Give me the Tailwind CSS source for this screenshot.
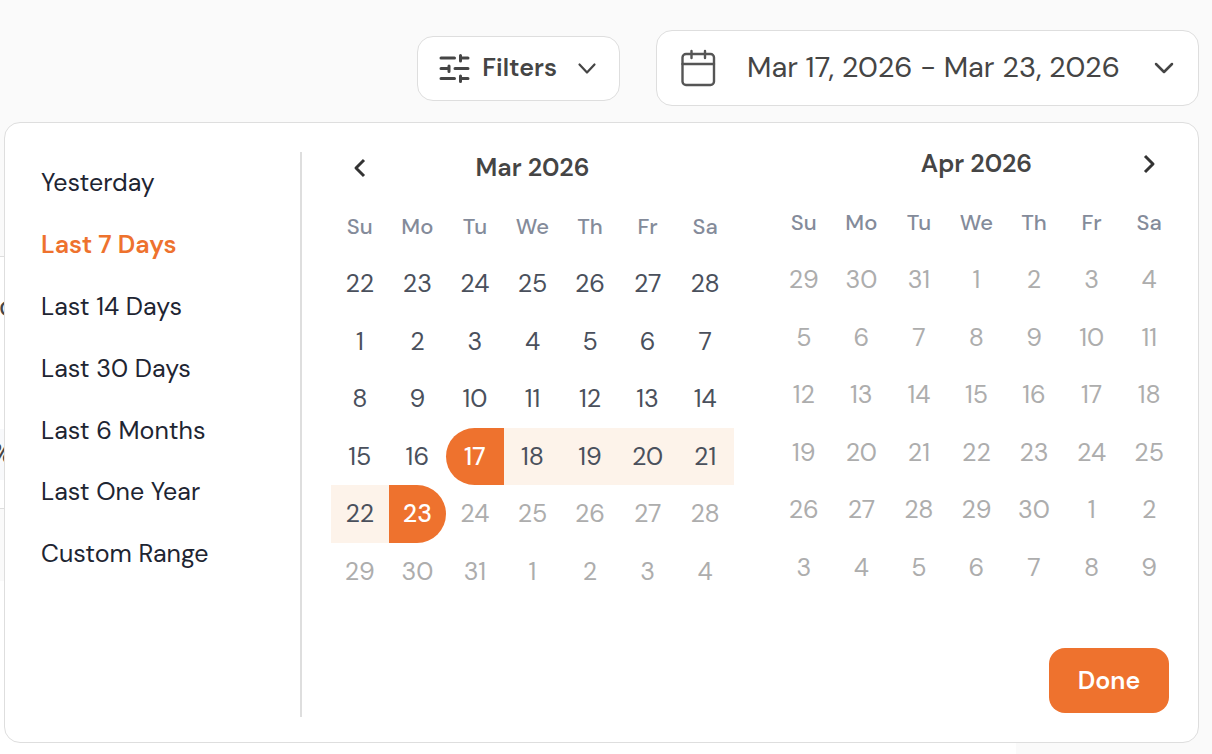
<!DOCTYPE html>
<html lang="en">
<head>
<meta charset="utf-8">
<meta name="viewport" content="width=device-width, initial-scale=1">
<title>Date range</title>
<script src="https://cdn.jsdelivr.net/npm/@tailwindcss/browser@4"></script>
</head>
<body class="relative h-screen overflow-hidden bg-[#fafafa] font-['DM_Sans',Inter,sans-serif] text-[#454545]">

<header class="flex items-center justify-end gap-9 pt-[30px] pr-[13px]">
  <button type="button" class="flex h-[65px] items-center rounded-2xl border border-[#dedede] bg-white pr-[22px] pl-5 text-[25px] font-semibold">
    <svg class="mr-3 size-8" viewBox="0 0 32 32" fill="none" stroke="currentColor" stroke-width="3" stroke-linecap="round" aria-hidden="true">
      <path d="M3 6h13.500M22.500 3.500v5.500M22.500 6h7.500M3 16.500h8M11 14v5.500M17 16.500h13M3 26.500h13.500M22.500 24v5.500M22.500 26.500h7.500"/>
    </svg>
    Filters
    <svg class="ml-5 h-5 w-5" viewBox="0 0 20 20" fill="none" stroke="currentColor" stroke-width="2.200" stroke-linecap="round" stroke-linejoin="round" aria-hidden="true"><path d="M2.500 6.500l7.500 8 7.500-8"/></svg>
  </button>

  <button type="button" class="flex h-[76px] w-[543px] items-center rounded-2xl border border-[#dedede] bg-white px-6 text-[29px]">
    <svg class="mr-[31px] h-[38px] w-[35px] shrink-0 text-[#555]" viewBox="0 0 35 38" fill="none" stroke="currentColor" stroke-width="2.400" stroke-linecap="round" aria-hidden="true">
      <rect x="1.500" y="5" width="31.500" height="31" rx="3.500"/><path d="M1.500 15h31.500M10.500 2v7M24 2v7"/>
    </svg>
    <span class="whitespace-nowrap">Mar 17, 2026 - Mar 23, 2026</span>
    <svg class="ml-auto h-5 w-5" viewBox="0 0 20 20" fill="none" stroke="currentColor" stroke-width="2.500" stroke-linecap="round" stroke-linejoin="round" aria-hidden="true"><path d="M2 6l8 8 8-8"/></svg>
  </button>
</header>

<main class="flex h-[648px] w-[1016px] flex-col pt-[150px] text-[28px]">
  <div class="flex h-[253px] shrink-0 flex-col overflow-hidden border-y border-[#dedede] bg-white">
    <p class="-ml-px h-[172px] pt-[29px]">c</p>
    <p class="h-[51px] bg-[#f8f9fb] pt-1"><span class="-ml-[9px]">%</span></p>
  </div>
  <div class="mt-[72px] grow bg-white"></div>
</main>

<section aria-label="Choose a date range" class="absolute top-[122px] right-[13px] left-1 flex rounded-2xl border border-[#dedede] bg-white pt-[29px] pr-5 pb-[25px]">
  <ul class="flex w-[297px] shrink-0 flex-col border-r-2 border-[#dedede] pl-9 text-[25px] text-[#1e2532]">
    <li class="flex h-[62px] items-center"><button type="button">Yesterday</button></li>
    <li class="flex h-[62px] items-center"><button type="button" class="font-semibold text-[#ee722e]">Last 7 Days</button></li>
    <li class="flex h-[62px] items-center"><button type="button">Last 14 Days</button></li>
    <li class="flex h-[62px] items-center"><button type="button">Last 30 Days</button></li>
    <li class="flex h-[61px] items-center"><button type="button">Last 6 Months</button></li>
    <li class="flex h-[62px] items-center"><button type="button">Last One Year</button></li>
    <li class="flex h-[62px] items-center"><button type="button">Custom Range</button></li>
  </ul>

  <div class="flex grow flex-col pl-[29px]">
    <div id="months" class="flex justify-between"></div>
    <button type="button" class="mt-auto mr-[9px] mb-1 h-[65px] w-[120px] self-end rounded-2xl bg-[#ee722e] text-[25px] font-semibold text-white">Done</button>
  </div>
</section>

<script>
const days = ['Su', 'Mo', 'Tu', 'We', 'Th', 'Fr', 'Sa'];
const left = '<svg class="size-6" viewBox="0 0 24 24" fill="none" stroke="#333" stroke-width="3" stroke-linejoin="round" aria-hidden="true"><path d="M16 4l-8 8 8 8"/></svg>';
const right = '<svg class="size-6" viewBox="0 0 24 24" fill="none" stroke="#333" stroke-width="3" stroke-linejoin="round" aria-hidden="true"><path d="M8 4l8 8-8 8"/></svg>';

// muted: index of the first cell that cannot be picked; range: first and last selected cell.
function month(title, first, length, previous, muted, range, nav, pad) {
  let rows = '';
  for (let w = 0; w < 6; w++) {
    rows += '<tr>';
    for (let d = 0; d < 7; d++) {
      const i = w * 7 + d;
      const n = i < first ? previous - first + 1 + i : i < first + length ? i - first + 1 : i - first - length + 1;
      let look = i >= muted ? 'text-[#adadad]' : 'text-[#4a505c]';
      if (range) {
        if (i === range[0]) look = 'rounded-l-full bg-[#ee722e] font-medium text-white';
        else if (i === range[1]) look = 'rounded-r-full bg-[#ee722e] font-medium text-white';
        else if (i > range[0] && i < range[1]) look = 'bg-[#fdf3ea] text-[#4a505c]';
      }
      rows += `<td class="p-0"><button type="button" class="block w-full ${w % 2 ? 'h-[57px]' : 'h-[58px]'} ${look}">${n}</button></td>`;
    }
    rows += '</tr>';
  }
  return `<div class="w-[403px] pb-12 ${pad}">
    <div class="grid grid-cols-7 items-center text-[25px] leading-6 font-semibold">
      <div class="grid h-6 place-items-center">${nav === 'prev' ? `<button type="button" aria-label="Previous month">${left}</button>` : ''}</div>
      <h2 class="col-span-5 text-center">${title}</h2>
      <div class="grid h-6 place-items-center">${nav === 'next' ? `<button type="button" aria-label="Next month">${right}</button>` : ''}</div>
    </div>
    <table class="mt-[18px] w-full table-fixed border-collapse text-center text-[25px]">
      <thead><tr>${days.map(d => `<th scope="col" class="h-[57px] p-0 text-[22px] font-medium text-[#848b9a]">${d}</th>`).join('')}</tr></thead>
      <tbody>${rows}</tbody>
    </table>
  </div>`;
}
document.getElementById('months').innerHTML =
  month('Mar 2026', 7, 31, 28, 30, [23, 29], 'prev', 'pt-1') +
  month('Apr 2026', 3, 30, 31, 0, null, 'next', '');
</script>
</body>
</html>
